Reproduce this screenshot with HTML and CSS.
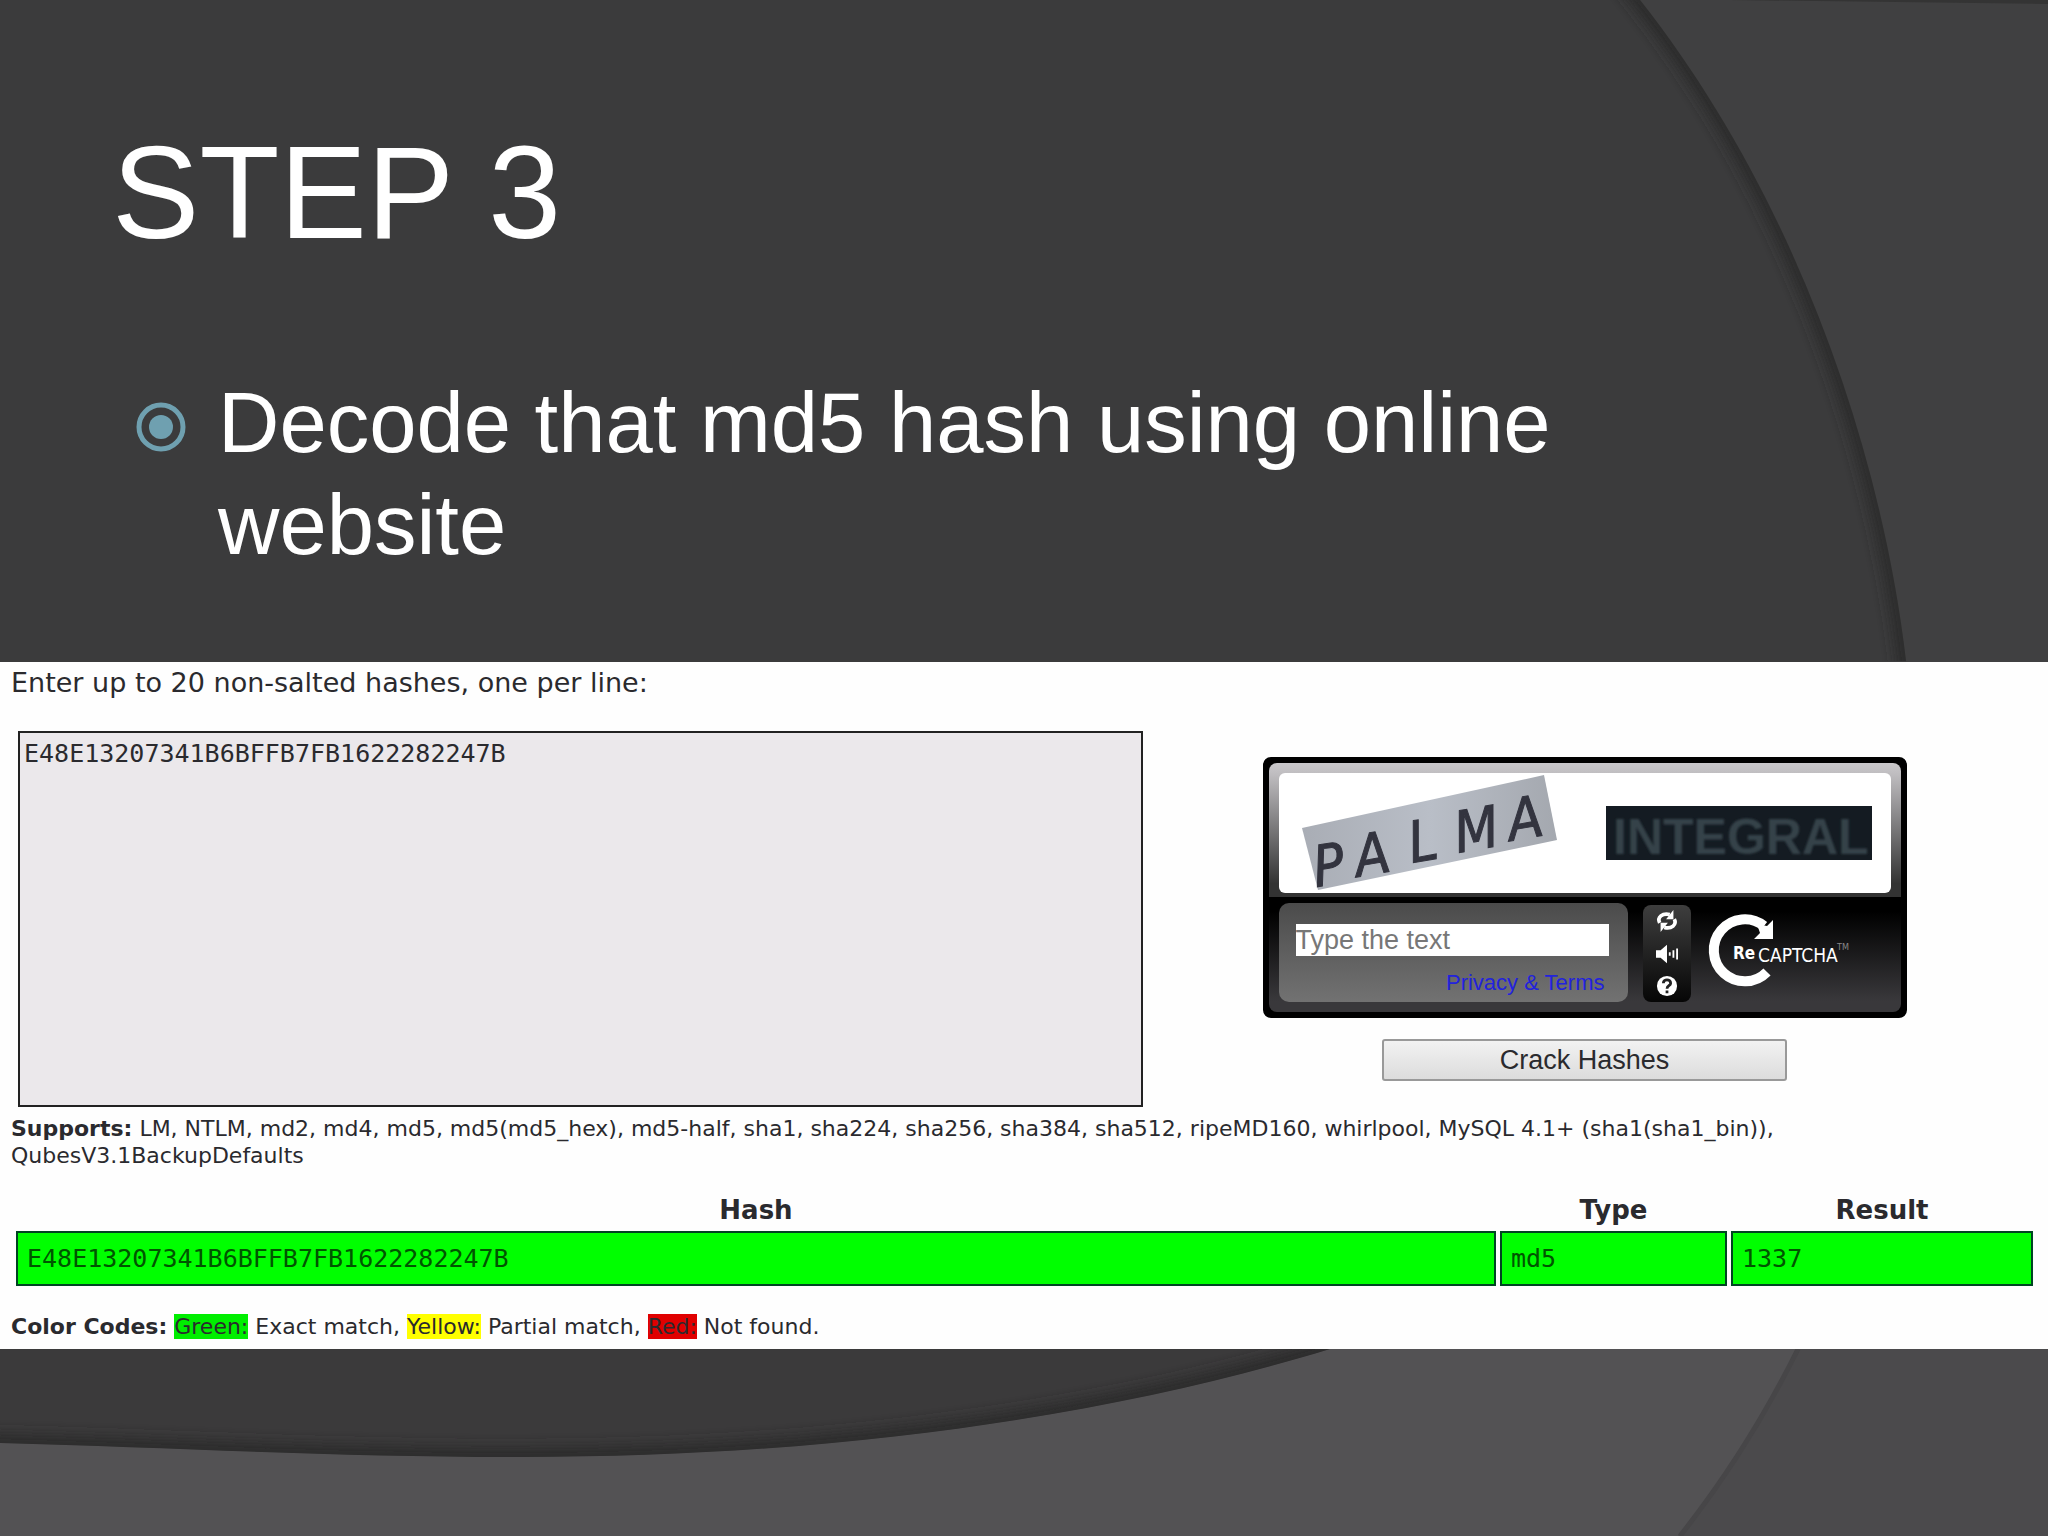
FILE: index.html
```
<!DOCTYPE html>
<html lang="en">

<head>
  <meta charset="UTF-8">
  <meta name="viewport" content="width=device-width, initial-scale=1.0">
  <title>Step 3</title>
  <link rel="stylesheet" href="styles.css">
</head>

<body>
  <div id="main">
    <svg class="backdrop" viewBox="0 0 2048 1536" preserveAspectRatio="none" aria-hidden="true">
      <defs>
        <filter id="soft" x="-10%" y="-10%" width="120%" height="120%">
          <feGaussianBlur stdDeviation="7" />
        </filter>
        <clipPath id="left-side">
          <path d="M0 0H1640C1790 190 1880 440 1906 661H0Z" />
        </clipPath>
        <clipPath id="above-wave">
          <path d="M0 0H2048V1349H1330C1130 1410 860 1457 522 1457C340 1457 180 1448 0 1443Z" />
        </clipPath>
      </defs>
      <rect width="2048" height="1536" fill="#404041" />
      <path d="M1730 0H2048V4Z" fill="#343434" />
      <path d="M0 0H1640C1790 190 1880 440 1906 661C1935 930 1900 1160 1794 1349H0Z" fill="#3b3b3c" />
      <g clip-path="url(#left-side)">
        <path d="M1600 -50L1640 0C1790 190 1880 440 1906 661L1910 700" fill="none" stroke="#2a2a2a" stroke-width="18" filter="url(#soft)" />
      </g>
      <rect y="1340" width="2048" height="196" fill="#4b4a4c" />
      <path d="M0 1340H1802L1798 1349Q1748 1450 1678 1536H0Z" fill="#535254" />
      <path d="M1798 1349Q1748 1450 1680 1536" fill="none" stroke="#474648" stroke-width="5" />
      <g clip-path="url(#above-wave)">
        <path d="M0 1300H1500V1349H1330C1130 1410 860 1457 522 1457C340 1457 180 1448 0 1443Z" fill="#3b3a3b" />
        <path d="M1480 1300L1330 1349C1130 1410 860 1457 522 1457C340 1457 180 1448 0 1443L-40 1441" fill="none" stroke="#2a292a" stroke-width="18" filter="url(#soft)" />
      </g>
    </svg>

    <header class="slide-text">
      <h1>STEP 3</h1>
      <ul class="points">
        <li>
          <svg class="bullet" viewBox="0 0 50 50" aria-hidden="true">
            <circle cx="25" cy="25" r="22" fill="none" stroke="#6fa0b0" stroke-width="5" />
            <circle cx="25" cy="25" r="12" fill="#6fa0b0" />
          </svg>
          <span>Decode that md5 hash using online website</span>
        </li>
      </ul>
    </header>

    <section class="cracker">
      <form method="post">
        <label class="intro" for="hashes">Enter up to 20 non-salted hashes, one per line:</label>
        <div class="form-row">
          <textarea id="hashes" name="hashes" spellcheck="false">E48E13207341B6BFFB7FB1622282247B</textarea>
          <div class="form-side">
            <div class="captcha">
              <div class="captcha-top">
                <svg class="captcha-words" viewBox="0 0 612 120" role="img" aria-label="PALMA INTEGRAL">
                  <defs>
                    <linearGradient id="plate" x1="0" x2="1">
                      <stop offset="0" stop-color="#a9adb5" />
                      <stop offset=".5" stop-color="#b9bec7" />
                      <stop offset="1" stop-color="#a4a8af" />
                    </linearGradient>
                    <filter id="fuzzy">
                      <feGaussianBlur stdDeviation="1" />
                    </filter>
                  </defs>
                  <path d="M23 55L265 2L278 67L39 117Z" fill="url(#plate)" />
                  <g class="palma">
                    <text transform="translate(37 114) rotate(-8)">P</text>
                    <text transform="translate(79 104) rotate(-10)">A</text>
                    <text transform="translate(133 90) rotate(-10)">L</text>
                    <text transform="translate(179 80) rotate(-10)">M</text>
                    <text transform="translate(232 68) rotate(-10)">A</text>
                  </g>
                  <rect x="327" y="33" width="266" height="54" fill="#141b22" />
                  <text class="integral" x="334" y="81" filter="url(#fuzzy)">INTEGRAL</text>
                </svg>
              </div>
              <div class="captcha-bottom">
                <div class="answer">
                  <input type="text" name="answer" placeholder="Type the text" aria-label="Type the text">
                  <a href="#">Privacy &amp; Terms</a>
                </div>
                <div class="captcha-tools">
                  <button type="button" aria-label="New challenge">
                    <svg viewBox="0 0 24 24">
                      <path d="M4 14C1 8 7 3 15 5M20 10C23 16 17 21 9 19" fill="none" stroke="#fff" stroke-width="4" />
                      <path d="M19 0V10H11ZM5 24V14H13Z" fill="#fff" />
                    </svg>
                  </button>
                  <button type="button" aria-label="Audio challenge">
                    <svg viewBox="0 0 24 24">
                      <path d="M0 8H5L12 2V22L5 16H0Z" fill="#fff" />
                      <path d="M15 10V14M19 8V16M23 6V18" fill="none" stroke="#fff" stroke-width="2" />
                    </svg>
                  </button>
                  <button type="button" aria-label="Help">
                    <svg viewBox="0 0 24 24">
                      <circle cx="12" cy="12" r="11" fill="#fff" />
                      <path d="M8 9C8 4 16 4 16 9C16 12 12 11 12 15M12 17V20" fill="none" stroke="#222" stroke-width="3" />
                    </svg>
                  </button>
                </div>
                <svg class="logo" viewBox="0 0 150 80" role="img" aria-label="reCAPTCHA">
                  <path d="M57 14A31 31 0 1 0 60 60" fill="none" stroke="#fff" stroke-width="10" />
                  <path d="M66 8V27H47L53 21L50 12L60 14Z" fill="#fff" />
                  <text class="logo-re" x="26" y="47">Re</text>
                  <text class="logo-captcha" x="51" y="50">CAPTCHA</text>
                  <text class="logo-tm" x="130" y="38">TM</text>
                </svg>
              </div>
            </div>
            <button type="submit" class="crack">Crack Hashes</button>
          </div>
        </div>
      </form>

      <p class="supports"><b>Supports:</b> LM, NTLM, md2, md4, md5, md5(md5_hex), md5-half, sha1, sha224, sha256, sha384, sha512, ripeMD160, whirlpool, MySQL 4.1+ (sha1(sha1_bin)), QubesV3.1BackupDefaults</p>

      <table class="results">
        <thead>
          <tr>
            <th>Hash</th>
            <th class="col-type">Type</th>
            <th class="col-result">Result</th>
          </tr>
        </thead>
        <tbody>
          <tr>
            <td>E48E13207341B6BFFB7FB1622282247B</td>
            <td>md5</td>
            <td>1337</td>
          </tr>
        </tbody>
      </table>

      <p class="codes"><b>Color Codes:</b> <span class="green">Green:</span> Exact match, <span class="yellow">Yellow:</span> Partial match, <span class="red">Red:</span> Not found.</p>
    </section>
  </div>
</body>

</html>
```
FILE: styles.css
```
body {
  margin: 0;
  font-family: "DejaVu Sans", Verdana, sans-serif;
}

#main {
  position: relative;
  min-height: 100vh;
  background: #3b3b3c;
  overflow: hidden;
}

.backdrop {
  position: absolute;
  inset: 0;
  width: 100%;
  height: 100%;
}

.slide-text {
  position: relative;
  padding: 117px 112px 86px;
  color: #fff;
  font-family: "Liberation Sans", Arial, sans-serif;
}

h1 {
  margin: 0;
  font-size: 131px;
  font-weight: normal;
  line-height: 152px;
}

.points {
  margin: 0;
  padding: 103px 0 0 24px;
  list-style: none;
}

.points li {
  display: flex;
  max-width: 1500px;
  font-size: 85px;
  line-height: 102px;
}

.bullet {
  flex: none;
  width: 50px;
  height: 50px;
  margin: 30px 32px 0 0;
}

.cracker {
  position: relative;
  padding: 7px 11px 8px;
  background: #fefefe;
  color: #2a2a2e;
}

.intro {
  display: block;
  font-size: 27px;
  line-height: 28px;
}

.form-row {
  display: flex;
  align-items: flex-start;
  padding: 34px 0 0 7px;
}

#hashes {
  box-sizing: border-box;
  flex: 1;
  height: 376px;
  padding: 7px 4px;
  border: 2px solid #222;
  background: #ebe8eb;
  color: #2a2a2e;
  font: 25px/28px "DejaVu Sans Mono", monospace;
  resize: none;
}

.form-side {
  display: flex;
  box-sizing: border-box;
  flex-direction: column;
  align-items: center;
  gap: 21px;
  width: 894px;
  padding: 26px 11px 0 0;
}

.captcha {
  box-sizing: border-box;
  width: 644px;
  border: 6px solid #000;
  border-radius: 8px;
  background: #000;
}

.captcha-top {
  padding: 10px 10px 4px;
  border-radius: 8px 8px 0 0;
  background: linear-gradient(#c9c7ca 0, #c0bec1 10px, #333 90%);
}

.captcha-words {
  display: block;
  width: 100%;
  height: 120px;
  border-radius: 6px;
  background: #fff;
}

.palma {
  fill: #33343f;
  stroke: #33343f;
  font: italic 57px "DejaVu Sans Condensed", "DejaVu Sans", sans-serif;
}

.integral {
  fill: #36424a;
  font: bold 50px "Liberation Sans", Arial, sans-serif;
}

.captcha-bottom {
  display: flex;
  align-items: flex-start;
  margin-top: 3px;
  padding: 3px 10px 10px;
  border-radius: 0 0 8px 8px;
  background: linear-gradient(#000 10%, #39383b 90%);
}

.answer {
  box-sizing: border-box;
  width: 349px;
  height: 99px;
  padding: 21px 19px 0 17px;
  border-radius: 10px;
  background: linear-gradient(#4b4b4b, #727272);
  text-align: right;
  font-family: "Liberation Sans", Arial, sans-serif;
}

.answer input {
  display: block;
  box-sizing: border-box;
  width: 100%;
  height: 32px;
  padding: 0;
  border: 0;
  background: #fff;
  font: 27px "Liberation Sans", Arial, sans-serif;
}

.answer input::placeholder {
  color: #777;
}

.answer a {
  display: block;
  padding: 14px 4px 0 0;
  color: #2222dd;
  font-size: 22px;
  line-height: 26px;
  text-decoration: none;
}

.captcha-tools {
  display: flex;
  box-sizing: border-box;
  flex-direction: column;
  align-items: center;
  justify-content: space-between;
  width: 48px;
  height: 97px;
  margin: 2px 0 0 15px;
  padding: 5px 0;
  border-radius: 8px;
  background: linear-gradient(#3e3e3e, #060606);
}

.captcha-tools button {
  padding: 0;
  border: 0;
  background: none;
}

.captcha-tools svg {
  display: block;
  width: 24px;
  height: 22px;
}

.logo {
  width: 150px;
  height: 80px;
  margin: 9px 0 0 16px;
}

.logo text {
  fill: #fff;
  font-family: "Liberation Sans Narrow", "DejaVu Sans Condensed", sans-serif;
}

.logo .logo-re {
  font-size: 17px;
  font-weight: bold;
}

.logo .logo-captcha {
  font-size: 19px;
}

.logo .logo-tm {
  fill: #888;
  font-size: 9px;
}

.crack {
  width: 405px;
  height: 42px;
  padding: 0;
  border: 2px solid #999;
  border-radius: 3px;
  background: linear-gradient(#f2f2f2, #dcdcdc);
  color: #2a2a2e;
  font: 27px "Liberation Sans", Arial, sans-serif;
}

.supports {
  margin: 8px 0 0;
  padding-right: 200px;
  font-size: 22px;
  line-height: 27px;
}

.results {
  width: 100%;
  margin-top: 21px;
  padding: 0 0 0 1px;
  border-spacing: 4px;
  table-layout: fixed;
}

.results th {
  padding: 0;
  font-size: 26px;
  line-height: 33px;
}

.results td {
  height: 51px;
  padding: 0 9px;
  border: 2px solid #042;
  background: #0f0;
  color: #050;
  font: 25px "DejaVu Sans Mono", monospace;
}

.results .col-type {
  width: 227px;
}

.results .col-result {
  width: 302px;
}

.codes {
  margin: 23px 0 0;
  font-size: 22px;
  line-height: 28px;
}

.green {
  background: #0e0;
}

.yellow {
  background: #ff0;
}

.red {
  background: #e00000;
}
```
